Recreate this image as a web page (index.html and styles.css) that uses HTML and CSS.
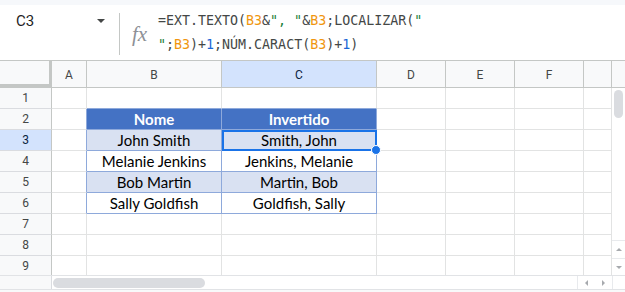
FILE: index.html
```html
<!DOCTYPE html>
<html>
<head>
<meta charset="utf-8">
<link rel="stylesheet" href="styles.css">
</head>
<body>
<div class="top-strip"></div>
<div class="fbar">
  <div class="namebox"><span class="ref">C3</span><span class="caret"></span></div>
  <div class="fdivider"></div>
  <div class="fx">fx</div>
  <div class="formula">
    <div class="fline">=EXT.TEXTO(<span class="r">B3</span>&amp;<span class="s">", "</span>&amp;<span class="r">B3</span>;LOCALIZAR(<span class="s">"</span></div>
    <div class="fline"><span class="s">"</span>;<span class="r">B3</span>)+<span class="n">1</span>;NÚM.CARACT(<span class="r">B3</span>)+<span class="n">1</span>)</div>
  </div>
</div>
<div class="sheet">
  <div class="grid">
    <div class="c corner"></div>
    <div class="c ch">A</div>
    <div class="c ch">B</div>
    <div class="c ch ch-sel">C</div>
    <div class="c ch">D</div>
    <div class="c ch">E</div>
    <div class="c ch">F</div>
    <div class="c ch"></div>

    <div class="c rh">1</div>
    <div class="c"></div>
    <div class="c tb-b"></div>
    <div class="c tb-b"></div>
    <div class="c"></div><div class="c"></div><div class="c"></div><div class="c"></div>

    <div class="c rh">2</div>
    <div class="c tb-r"></div>
    <div class="c hd tb-r tb-b">Nome</div>
    <div class="c hd tb-r tb-b">Invertido</div>
    <div class="c"></div><div class="c"></div><div class="c"></div><div class="c"></div>

    <div class="c rh rh-sel">3</div>
    <div class="c tb-r"></div>
    <div class="c d band tb-r tb-b">John Smith</div>
    <div class="c d band tb-r tb-b sel-cell">Smith, John<span class="sel"><span class="handle"></span></span></div>
    <div class="c"></div><div class="c"></div><div class="c"></div><div class="c"></div>

    <div class="c rh">4</div>
    <div class="c tb-r"></div>
    <div class="c d tb-r tb-b">Melanie Jenkins</div>
    <div class="c d tb-r tb-b">Jenkins, Melanie</div>
    <div class="c"></div><div class="c"></div><div class="c"></div><div class="c"></div>

    <div class="c rh">5</div>
    <div class="c tb-r"></div>
    <div class="c d band tb-r tb-b">Bob Martin</div>
    <div class="c d band tb-r tb-b">Martin, Bob</div>
    <div class="c"></div><div class="c"></div><div class="c"></div><div class="c"></div>

    <div class="c rh">6</div>
    <div class="c tb-r"></div>
    <div class="c d tb-r tb-b">Sally Goldfish</div>
    <div class="c d tb-r tb-b">Goldfish, Sally</div>
    <div class="c"></div><div class="c"></div><div class="c"></div><div class="c"></div>

    <div class="c rh">7</div>
    <div class="c"></div><div class="c"></div><div class="c"></div><div class="c"></div><div class="c"></div><div class="c"></div><div class="c"></div>

    <div class="c rh">8</div>
    <div class="c"></div><div class="c"></div><div class="c"></div><div class="c"></div><div class="c"></div><div class="c"></div><div class="c"></div>

    <div class="c rh">9</div>
    <div class="c"></div><div class="c"></div><div class="c"></div><div class="c"></div><div class="c"></div><div class="c"></div><div class="c"></div>
  </div>
  <div class="vscroll">
    <div class="vs-head"></div>
    <div class="vs-track"><div class="vs-thumb"></div></div>
    <div class="vs-btn"><span class="tri-up"></span></div>
    <div class="vs-btn vs-btn-last"><span class="tri-down"></span></div>
  </div>
</div>
<div class="hscroll">
  <div class="hs-left"></div>
  <div class="hs-track"><div class="hs-thumb"></div></div>
  <div class="hs-btns">
    <div class="hs-btn"><span class="tri-left"></span></div>
    <div class="hs-btn"><span class="tri-right"></span></div>
  </div>
  <div class="hs-end"></div>
</div>
<div class="bottom-strip"></div>
</body>
</html>
```

FILE: styles.css
```css
* { box-sizing: border-box; }
html, body { margin: 0; padding: 0; }
body {
  width: 625px;
  height: 292px;
  overflow: hidden;
  background: #ffffff;
  font-family: Roboto, "Liberation Sans", sans-serif;
}

.top-strip {
  height: 5px;
  background: #f6f8fb;
}

.fbar {
  display: flex;
  height: 56px;
  border-bottom: 1px solid #c4c7c5;
  background: #ffffff;
}

.namebox {
  width: 119px;
  display: flex;
  align-items: flex-start;
  padding-left: 16px;
  padding-top: 7px;
}
.ref {
  font-size: 15px;
  line-height: 18px;
  color: #1f1f1f;
  width: 81px;
}
.caret {
  width: 0;
  height: 0;
  margin-top: 7px;
  border-left: 4px solid transparent;
  border-right: 4px solid transparent;
  border-top: 4px solid #444746;
}

.fdivider {
  width: 1px;
  margin-top: 8px;
  height: 42px;
  background: #c4c7c5;
}

.fx {
  width: 38px;
  padding-left: 12px;
  padding-top: 19px;
  font-family: "Liberation Serif", serif;
  font-style: italic;
  font-size: 21px;
  line-height: 20px;
  color: #8d9096;
}

.formula {
  padding-top: 4px;
  font-family: "DejaVu Sans Mono", monospace;
  font-size: 13.3px;
  line-height: 24px;
  color: #444746;
}
.fline { white-space: pre; }
.formula .r { color: #f0960f; }
.formula .s { color: #188038; }
.formula .n { color: #1a66d6; }

.sheet {
  display: flex;
  height: 214px;
}

.grid {
  display: grid;
  grid-template-columns: 52px 35px 135px 155px 69px 69px 69px 28px;
  grid-template-rows: 27px repeat(9, 21px);
  width: 612px;
  height: 214px;
  overflow: hidden;
}

.c {
  display: flex;
  align-items: center;
  justify-content: center;
  border-right: 1px solid #e2e3e3;
  border-bottom: 1px solid #e2e3e3;
  background: #ffffff;
}

.corner {
  background: #f8f9fa;
  border-right: 3px solid #c4c7c5;
  border-bottom: 4px solid #c4c7c5;
}

.ch {
  background: #f8f9fa;
  border-right: 1px solid #c4c7c5;
  border-bottom: 1px solid #c4c7c5;
  font-size: 12px;
  color: #444746;
  padding-top: 2px;
}
.ch-sel {
  background: #d3e3fd;
  color: #0b1f3f;
}

.rh {
  background: #f8f9fa;
  border-right: 1px solid #c4c7c5;
  border-bottom: 1px solid #dadce0;
  font-size: 12px;
  color: #444746;
}
.rh-sel {
  background: #d3e3fd;
  color: #0b1f3f;
}

.tb-r { border-right-color: #8ea9db; }
.tb-b { border-bottom-color: #8ea9db; }

.d, .hd {
  font-family: Lato, "Open Sans", sans-serif;
  font-size: 15px;
  line-height: 17px;
  align-items: flex-end;
  padding-bottom: 1px;
  color: #000000;
}
.hd {
  background: #4472c4;
  color: #ffffff;
  font-weight: 700;
}
.band { background: #d9e1f2; }

.sel-cell { position: relative; }
.sel {
  position: absolute;
  left: 0;
  top: 0;
  width: 155px;
  height: 21px;
  border: 2px solid #1a73e8;
}
.handle {
  position: absolute;
  right: -6px;
  bottom: -6px;
  width: 10px;
  height: 10px;
  border-radius: 50%;
  background: #1a73e8;
  border: 1px solid #ffffff;
}

.vscroll {
  width: 13px;
  display: flex;
  flex-direction: column;
}
.vs-head {
  height: 27px;
  background: #f8f9fa;
  border-bottom: 1px solid #c4c7c5;
}
.vs-track {
  flex: 1;
  padding: 2px 0 0 2px;
}
.vs-thumb {
  width: 9px;
  height: 28px;
  border-radius: 5px;
  background: #dadce0;
}
.vs-btn {
  height: 18px;
  display: flex;
  align-items: center;
  justify-content: center;
  border-top: 1px solid #e8eaed;
}
.vs-btn-last { height: 17px; }

.tri-up, .tri-down, .tri-left, .tri-right {
  width: 0;
  height: 0;
}
.tri-up {
  border-left: 3px solid transparent;
  border-right: 3px solid transparent;
  border-bottom: 3px solid #a7aaae;
}
.tri-down {
  border-left: 3px solid transparent;
  border-right: 3px solid transparent;
  border-top: 3px solid #a7aaae;
}
.tri-left {
  border-top: 3px solid transparent;
  border-bottom: 3px solid transparent;
  border-right: 3px solid #a7aaae;
}
.tri-right {
  border-top: 3px solid transparent;
  border-bottom: 3px solid transparent;
  border-left: 3px solid #a7aaae;
}

.hscroll {
  display: flex;
  height: 15px;
  border-top: 1px solid #e1e3e6;
  border-bottom: 1px solid #e1e3e6;
}
.hs-left {
  width: 52px;
  background: #f8f9fa;
  border-right: 1px solid #dadce0;
}
.hs-track {
  width: 525px;
  display: flex;
  align-items: center;
  padding-left: 1px;
}
.hs-thumb {
  width: 152px;
  height: 10px;
  border-radius: 5px;
  background: #dadce0;
}
.hs-btns {
  width: 35px;
  display: flex;
  border-left: 1px solid #e8eaed;
}
.hs-btn {
  flex: 1;
  display: flex;
  align-items: center;
  justify-content: center;
}
.hs-end {
  width: 13px;
  border-left: 1px solid #e8eaed;
}

.bottom-strip {
  height: 3px;
  background: #f8f9fa;
}
```
